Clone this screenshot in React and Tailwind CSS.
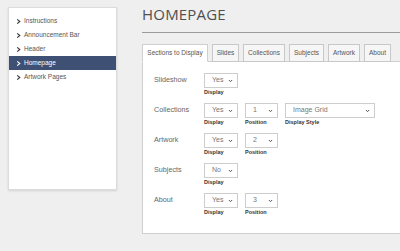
import React from "react";

const font = "font-['Liberation_Sans',Arial,sans-serif]";

function Chevron() {
  return (
    <svg width="5" height="7" viewBox="0 0 5 7" className="shrink-0">
      <polyline points="1.2,1.3 3.8,3.5 1.2,5.7" fill="none" stroke="currentColor" strokeWidth="1.1" />
    </svg>
  );
}

function Caret() {
  return (
    <svg width="5" height="4" viewBox="0 0 5 4" className="shrink-0">
      <polyline points="0.9,1 2.5,2.7 4.1,1" fill="none" stroke="#555" strokeWidth="1" />
    </svg>
  );
}

function Select({ value, w, caption }) {
  return (
    <div className="flex flex-col">
      <div
        className={`${w} h-[15px] border border-[#cdcdcd] bg-white flex items-center justify-between pl-[7px] pr-[4px] text-[7px] text-[#777]`}
      >
        <span>{value}</span>
        <Caret />
      </div>
      <div className="mt-[1px] h-[7px] leading-[7px] text-[5.5px] font-bold text-[#333]">{caption}</div>
    </div>
  );
}

function Row({ label, children }) {
  return (
    <div className="flex items-start">
      <div className="w-[50px] leading-[14px] text-[7.2px] text-[#666]">{label}</div>
      <div className="flex gap-[7px]">{children}</div>
    </div>
  );
}

export default function App() {
  const items = ["Instructions", "Announcement Bar", "Header", "Homepage", "Artwork Pages"];
  const tabs = [
    ["Sections to Display", "w-[66px]"],
    ["Slides", "w-[27px]"],
    ["Collections", "w-[42px]"],
    ["Subjects", "w-[35px]"],
    ["Artwork", "w-[32px]"],
    ["About", "w-[27px]"],
  ];
  return (
    <div className={`w-[400px] h-[251px] overflow-hidden bg-[#efefef] flex items-start pl-[8px] pt-[7px] ${font}`}>
      <aside className="w-[109px] h-[183px] shrink-0 bg-white border border-[#dcdcdc] shadow-[0_1px_2px_rgba(0,0,0,0.12)] pt-[6px] flex flex-col">
        {items.map((it) => (
          <div
            key={it}
            className={`h-[14px] flex items-center pl-[7px] gap-[3px] text-[6.5px] ${
              it === "Homepage" ? "bg-[#3e5073] text-white" : "text-[#555]"
            }`}
          >
            <span className={it === "Homepage" ? "text-white" : "text-[#333]"}>
              <Chevron />
            </span>
            <span>{it}</span>
          </div>
        ))}
      </aside>
      <main className="ml-[25px] w-[270px] shrink-0 flex flex-col">
        <h1 className="h-[15px] leading-[15px] text-[15px] text-[#505050] font-['Open_Sans',sans-serif] tracking-[0.2px]">
          HOMEPAGE
        </h1>
        <div className="mt-[10px] h-px bg-[#9a9a9a]" />
        <div className="mt-[11px] flex items-end gap-[4px] relative z-10">
          {tabs.map(([t, w], i) => (
            <div
              key={t}
              className={`${w} h-[18px] -mb-px flex items-center justify-center border text-[6.5px] text-[#555] ${
                i === 0 ? "bg-white border-[#cfcfcf] border-b-white" : "bg-[#f6f6f6] border-[#c8c8c8]"
              }`}
            >
              {t}
            </div>
          ))}
        </div>
        <div className="border border-[#cfcfcf] bg-white pl-[11px] pt-[11px] pb-[17px] flex flex-col gap-[7px]">
          <Row label="Slideshow">
            <Select value="Yes" w="w-[34px]" caption="Display" />
          </Row>
          <Row label="Collections">
            <Select value="Yes" w="w-[34px]" caption="Display" />
            <Select value="1" w="w-[33px]" caption="Position" />
            <Select value="Image Grid" w="w-[90px]" caption="Display Style" />
          </Row>
          <Row label="Artwork">
            <Select value="Yes" w="w-[34px]" caption="Display" />
            <Select value="2" w="w-[33px]" caption="Position" />
          </Row>
          <Row label="Subjects">
            <Select value="No" w="w-[34px]" caption="Display" />
          </Row>
          <Row label="About">
            <Select value="Yes" w="w-[34px]" caption="Display" />
            <Select value="3" w="w-[33px]" caption="Position" />
          </Row>
        </div>
      </main>
    </div>
  );
}
